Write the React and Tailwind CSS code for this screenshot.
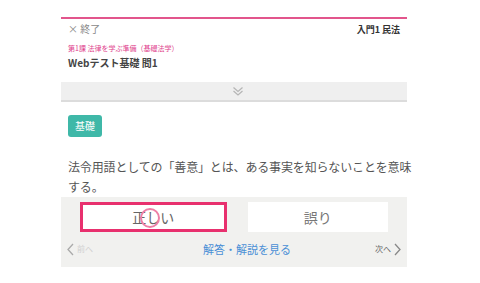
import React from "react";

const font = { fontFamily: '"Noto Sans CJK JP", "Noto Sans", sans-serif' };

function DoubleChevron() {
  return (
    <svg width="12" height="11" viewBox="0 0 12 11" fill="none" stroke="#b5b5b5" strokeWidth="1.2">
      <path d="M1.5 1.5 L6 5.5 L10.5 1.5" />
      <path d="M1.5 5 L6 9 L10.5 5" />
    </svg>
  );
}

function Chevron({ dir, color }) {
  return (
    <svg width="7" height="13" viewBox="0 0 7 13" fill="none" stroke={color} strokeWidth="1.3">
      {dir === "left" ? <path d="M6 1 L1 6.5 L6 12" /> : <path d="M1 1 L6 6.5 L1 12" />}
    </svg>
  );
}

export default function App() {
  return (
    <div className="w-[480px] h-[283px] bg-white pt-[17px] pl-[61px]" style={font}>
      <div className="w-[346px] flex flex-col">
        {/* header */}
        <div className="border-t-2 border-[#e2558c] bg-white px-[7px]">
          <div className="flex items-center justify-between h-[18px] mt-[1px]">
            <span className="text-[10px] text-[#8a8a8a] leading-none">× 終了</span>
            <span className="text-[9px] font-bold text-[#333] leading-none">入門1 民法</span>
          </div>
          <div className="text-[7px] text-[#e0408c] leading-none mt-[7px]">第1課 法律を学ぶ準備（基礎法学）</div>
          <div className="text-[10px] font-semibold text-[#444] leading-none mt-[6px] mb-[14px]">Webテスト基礎 問1</div>
        </div>

        {/* collapse bar */}
        <div className="h-[20px] bg-[#efefef] border-b-2 border-[#dcdcdc] flex items-center justify-center pl-[8px]">
          <DoubleChevron />
        </div>

        {/* question */}
        <div className="bg-white pl-[7px] pr-[2px] pt-[9px]">
          <span className="inline-flex items-center justify-center w-[34px] h-[22px] rounded-[3px] bg-[#3fb8a8] text-white text-[10px] leading-none">
            基礎
          </span>
          <p className="mt-[20px] text-[12px] leading-[20px] tracking-[-0.15px] text-[#555]">
            <span className="whitespace-nowrap">法令用語としての「善意」とは、ある事実を知らないことを意味</span>
            <br />
            する。
          </p>
        </div>

        {/* answer area */}
        <div className="bg-[#f1f1ef] h-[70px] pt-[5px]">
          <div className="flex gap-[21px] px-[19px]">
            <div className="relative flex-1 h-[30px] bg-white border-[3px] border-[#e8306e] flex items-center justify-center text-[14px] text-[#666]">
              正しい
              <span className="absolute left-[57px] top-[3px] w-[20px] h-[20px] rounded-full border-2 border-[#ee7fa6]" />
            </div>
            <div className="flex-1 h-[30px] bg-white flex items-center justify-center text-[14px] text-[#777]">
              誤り
            </div>
          </div>
          <div className="flex items-center justify-between px-[6px] mt-[9px]">
            <span className="flex items-center gap-[3px] text-[8px] text-[#d0d0d0]">
              <Chevron dir="left" color="#aaa" />
              前へ
            </span>
            <span className="text-[11px] text-[#4a8fd6] ml-[26px]">解答・解説を見る</span>
            <span className="flex items-center gap-[3px] text-[8px] text-[#666]">
              次へ
              <Chevron dir="right" color="#888" />
            </span>
          </div>
        </div>
      </div>
    </div>
  );
}
